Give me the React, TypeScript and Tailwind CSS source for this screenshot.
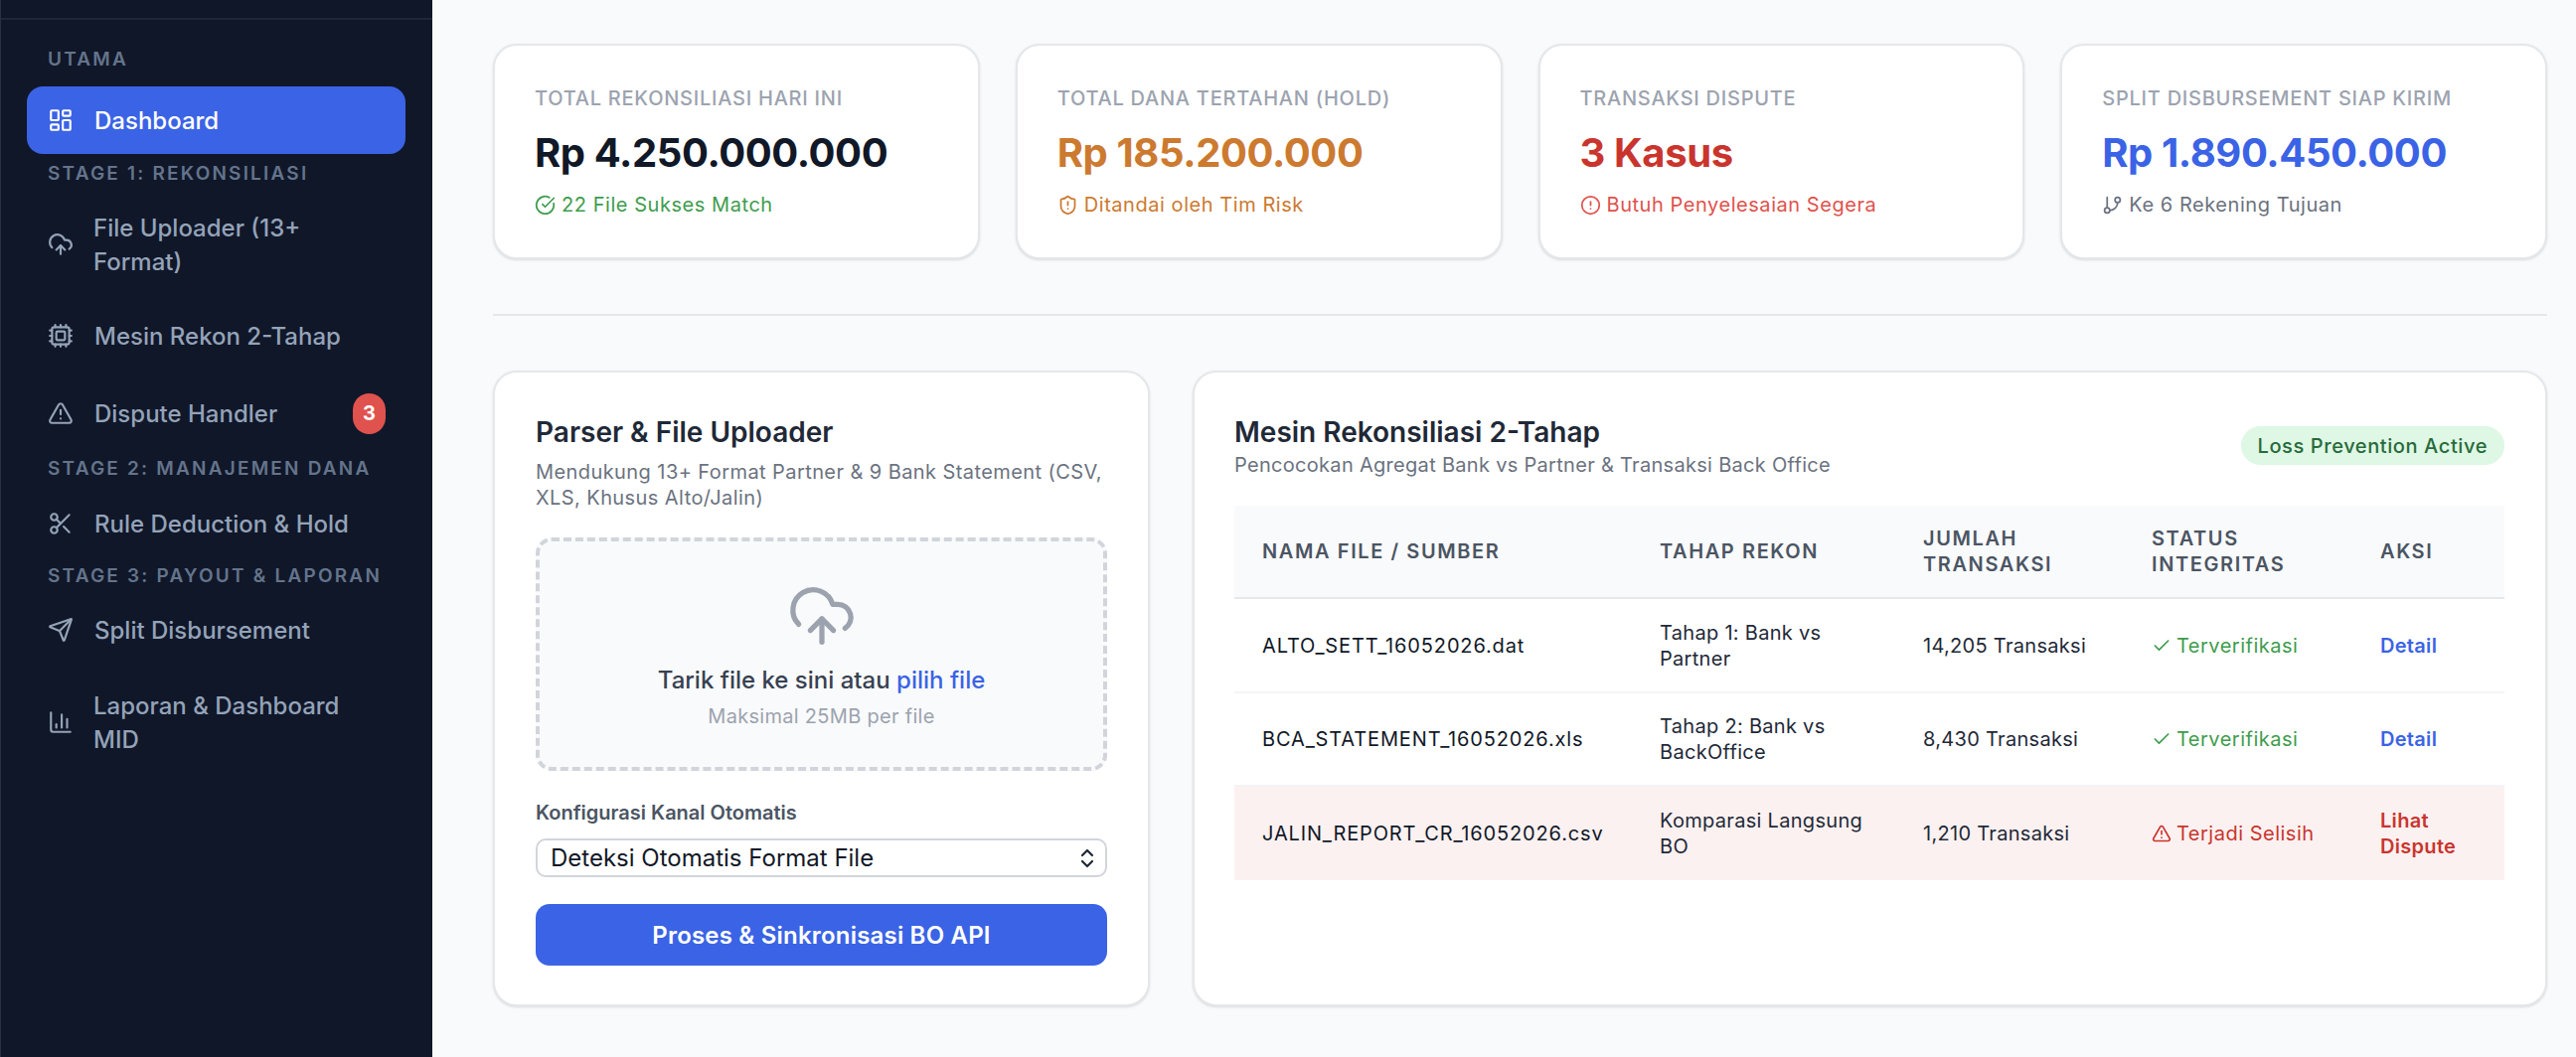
import {
  LayoutDashboard,
  CloudUpload,
  Cpu,
  TriangleAlert,
  Scissors,
  Send,
  ChartColumn,
  CircleCheckBig,
  ShieldAlert,
  CircleAlert,
  GitBranch,
  Check,
  ChevronsUpDown,
} from "lucide-react";
import type { LucideIcon } from "lucide-react";

interface NavItem {
  label: string;
  icon: LucideIcon;
  tall?: boolean;
  active?: boolean;
  badge?: string;
  spacing?: string;
}

function SectionLabel({ text, spacing }: { text: string; spacing: string }) {
  return (
    <div className={`${spacing} h-[22px] pl-[21px] text-[19px] leading-[22px] font-semibold tracking-[2.2px] text-[#64748b] whitespace-nowrap`}>
      {text}
    </div>
  );
}

function SideLink({ label, icon: Icon, tall, active, badge, spacing = "mt-[10px]" }: NavItem) {
  return (
    <div
      className={`${spacing} flex items-center rounded-[16px] pl-[21px] pr-[20px] ${tall ? "h-[96px]" : "h-[68px]"} ${
        active ? "bg-[#3b63e5] text-white" : "text-[#94a3b8]"
      }`}
    >
      <Icon className="w-[26px] h-[26px] shrink-0" strokeWidth={2} />
      <span className={`pt-[1px] flex-1 text-[24px] leading-[34px] font-medium ${tall ? "ml-[20px]" : "ml-[21px]"}`}>{label}</span>
      {badge && (
        <span className="flex items-center justify-center w-[33px] h-[41px] rounded-full bg-[#e0524d] text-white text-[20px] font-bold">
          {badge}
        </span>
      )}
    </div>
  );
}

function Sidebar() {
  return (
    <aside className="w-[435px] shrink-0 h-full bg-[#101729] border-l border-l-[#2a3142]">
      <div className="h-[20px] border-b-2 border-b-[#1f2737]" />
      <nav className="flex flex-col pl-[26px] pr-[27px] pt-[29px]">
        <SectionLabel text="UTAMA" spacing="" />
        <SideLink label="Dashboard" icon={LayoutDashboard} active spacing="mt-[16px]" />
        <SectionLabel text="STAGE 1: REKONSILIASI" spacing="mt-[9px]" />
        <SideLink label="File Uploader (13+ Format)" icon={CloudUpload} tall spacing="mt-[12px]" />
        <SideLink label="Mesin Rekon 2-Tahap" icon={Cpu} />
        <SideLink label="Dispute Handler" icon={TriangleAlert} badge="3" />
        <SectionLabel text="STAGE 2: MANAJEMEN DANA" spacing="mt-[11px]" />
        <SideLink label="Rule Deduction & Hold" icon={Scissors} />
        <SectionLabel text="STAGE 3: PAYOUT & LAPORAN" spacing="mt-[8px]" />
        <SideLink label="Split Disbursement" icon={Send} spacing="mt-[9px]" />
        <SideLink label="Laporan & Dashboard MID" icon={ChartColumn} tall spacing="mt-[11px]" />
      </nav>
    </aside>
  );
}

function StatCard({
  title,
  value,
  valueClass,
  note,
  noteClass,
  icon: Icon,
}: {
  title: string;
  value: string;
  valueClass: string;
  note: string;
  noteClass: string;
  icon: LucideIcon;
}) {
  return (
    <div className="h-[217px] bg-white rounded-[24px] border-2 border-[#e5e7eb] shadow-sm pl-[40px] pt-[40px]">
      <div className="text-[20px] leading-[26px] font-medium tracking-[0.75px] text-[#9ca3af] whitespace-nowrap">{title}</div>
      <div className={`mt-[18px] text-[40px] leading-[48px] font-bold tracking-[-0.4px] ${valueClass}`}>{value}</div>
      <div className={`mt-[15px] flex items-center gap-[6px] text-[20px] leading-[26px] tracking-[0.55px] ${noteClass}`}>
        <Icon className="w-[21px] h-[21px]" strokeWidth={2} />
        {note}
      </div>
    </div>
  );
}

const rows = [
  {
    file: "ALTO_SETT_16052026.dat",
    stage: "Tahap 1: Bank vs Partner",
    count: "14,205 Transaksi",
    ok: true,
    action: "Detail",
  },
  {
    file: "BCA_STATEMENT_16052026.xls",
    stage: "Tahap 2: Bank vs BackOffice",
    count: "8,430 Transaksi",
    ok: true,
    action: "Detail",
  },
  {
    file: "JALIN_REPORT_CR_16052026.csv",
    stage: "Komparasi Langsung BO",
    count: "1,210 Transaksi",
    ok: false,
    action: "Lihat Dispute",
  },
];

function ReconTable() {
  return (
    <table className="mt-[28px] w-full table-fixed border-collapse text-left">
      <thead>
        <tr className="h-[93px] bg-[#f9fafb] border-b-2 border-b-[#e5e7eb] text-[20px] leading-[26px] font-semibold tracking-[1.6px] text-[#4b5563]">
          <th className="w-[400px] pl-[28px] pr-[28px] font-semibold">NAMA FILE / SUMBER</th>
          <th className="w-[265px] pl-[28px] pr-[28px] font-semibold">TAHAP REKON</th>
          <th className="w-[230px] pl-[28px] pr-[28px] font-semibold">JUMLAH TRANSAKSI</th>
          <th className="w-[230px] pl-[28px] pr-[20px] font-semibold">STATUS INTEGRITAS</th>
          <th className="pl-[28px] pr-[28px] font-semibold">AKSI</th>
        </tr>
      </thead>
      <tbody className="text-[20px] leading-[26px] tracking-[0.3px] text-[#1f2937]">
        {rows.map((r) => (
          <tr key={r.file} className={`h-[94.5px] ${r.ok ? "border-b-2 border-b-[#f3f4f6]" : "bg-[#fcf1f1]"}`}>
            <td className="pl-[28px] pt-[1px] tracking-[0.85px] text-[#111827] whitespace-nowrap">{r.file}</td>
            <td className="pl-[28px] pr-[28px] pt-[1px]">{r.stage}</td>
            <td className="pl-[28px] pt-[1px]">{r.count}</td>
            <td className="pl-[28px] pt-[1px] tracking-[0.5px]">
              {r.ok ? (
                <span className="flex items-center gap-[5px] text-[#3f9c4e]">
                  <Check className="w-[20px] h-[20px]" strokeWidth={2} />
                  Terverifikasi
                </span>
              ) : (
                <span className="flex items-center gap-[5px] text-[#c9352e]">
                  <TriangleAlert className="w-[20px] h-[20px]" strokeWidth={2} />
                  Terjadi Selisih
                </span>
              )}
            </td>
            <td className={`pl-[28px] pr-[28px] pt-[1px] font-semibold ${r.ok ? "text-[#3b63e5]" : "text-[#c9352e]"}`}>{r.action}</td>
          </tr>
        ))}
      </tbody>
    </table>
  );
}

export default function App() {
  return (
    <div className="flex w-[2592px] h-[1064px] overflow-hidden bg-[#f9fafb] font-['Inter',sans-serif]">
      <Sidebar />
      <main className="flex-1 min-w-0 pl-[61px] pr-[29px] pt-[44px]">
        <div className="grid grid-cols-4 gap-[36px]">
          <StatCard
            title="TOTAL REKONSILIASI HARI INI"
            value="Rp 4.250.000.000"
            valueClass="text-[#111827]"
            note="22 File Sukses Match"
            noteClass="text-[#3f9c4e]"
            icon={CircleCheckBig}
          />
          <StatCard
            title="TOTAL DANA TERTAHAN (HOLD)"
            value="Rp 185.200.000"
            valueClass="text-[#cc7a30]"
            note="Ditandai oleh Tim Risk"
            noteClass="text-[#cc7a30]"
            icon={ShieldAlert}
          />
          <StatCard
            title="TRANSAKSI DISPUTE"
            value="3 Kasus"
            valueClass="text-[#c9352e]"
            note="Butuh Penyelesaian Segera"
            noteClass="text-[#e0524d]"
            icon={CircleAlert}
          />
          <StatCard
            title="SPLIT DISBURSEMENT SIAP KIRIM"
            value="Rp 1.890.450.000"
            valueClass="text-[#3b63e5]"
            note="Ke 6 Rekening Tujuan"
            noteClass="text-[#6b7280]"
            icon={GitBranch}
          />
        </div>

        <div className="mt-[55px] h-[2px] bg-[#e5e7eb]" />

        <div className="mt-[55px] flex gap-[43px]">
          <section className="w-[661px] h-[640px] shrink-0 bg-white rounded-[24px] border-2 border-[#e5e7eb] shadow-sm px-[41px] pt-[42px]">
            <h2 className="text-[28px] leading-[36px] font-semibold text-[#1f2937]">Parser &amp; File Uploader</h2>
            <p className="mt-[9px] text-[20px] leading-[26px] tracking-[0.42px] text-[#6b7280]">
              Mendukung 13+ Format Partner &amp; 9 Bank Statement (CSV, XLS, Khusus Alto/Jalin)
            </p>
            <div className="mt-[27px] h-[235px] flex flex-col items-center rounded-[16px] border-4 border-dashed border-[#d1d5db] bg-[#f9fafb] pt-[40px]">
              <CloudUpload className="w-[70px] h-[70px] text-[#9ca3af]" strokeWidth={1.8} />
              <div className="mt-[14px] text-[24px] leading-[32px] font-medium text-[#374151]">
                Tarik file ke sini atau <span className="text-[#3b63e5]">pilih file</span>
              </div>
              <div className="mt-[7px] text-[20px] leading-[26px] tracking-[0.3px] text-[#9ca3af]">Maksimal 25MB per file</div>
            </div>
            <label className="block mt-[29px] text-[20px] leading-[26px] font-semibold text-[#4b5563]">Konfigurasi Kanal Otomatis</label>
            <div className="mt-[13px] h-[39px] flex items-center justify-between rounded-[10px] border-2 border-[#d1d5db] pl-[13px] pr-[6px] text-[24px] text-[#111827]">
              Deteksi Otomatis Format File
              <ChevronsUpDown className="w-[24px] h-[24px] text-[#1f2937]" strokeWidth={2.2} />
            </div>
            <button className="mt-[27px] w-full h-[62px] pt-[2px] rounded-[14px] bg-[#3b63e5] text-white text-[24px] tracking-[0.2px] font-semibold">
              Proses &amp; Sinkronisasi BO API
            </button>
          </section>

          <section className="flex-1 min-w-0 h-[640px] bg-white rounded-[24px] border-2 border-[#e5e7eb] shadow-sm pl-[40px] pr-[41px] pt-[42px]">
            <div className="flex items-start justify-between">
              <div>
                <h2 className="text-[28px] leading-[36px] font-semibold text-[#1f2937]">Mesin Rekonsiliasi 2-Tahap</h2>
                <p className="mt-[2px] text-[20px] leading-[26px] tracking-[0.3px] text-[#6b7280]">
                  Pencocokan Agregat Bank vs Partner &amp; Transaksi Back Office
                </p>
              </div>
              <span className="mt-[12px] flex items-center h-[39px] px-[17px] rounded-full bg-[#dff7e5] text-[#276b3a] text-[20px] tracking-[0.6px] font-medium">
                Loss Prevention Active
              </span>
            </div>
            <ReconTable />
          </section>
        </div>
      </main>
    </div>
  );
}
